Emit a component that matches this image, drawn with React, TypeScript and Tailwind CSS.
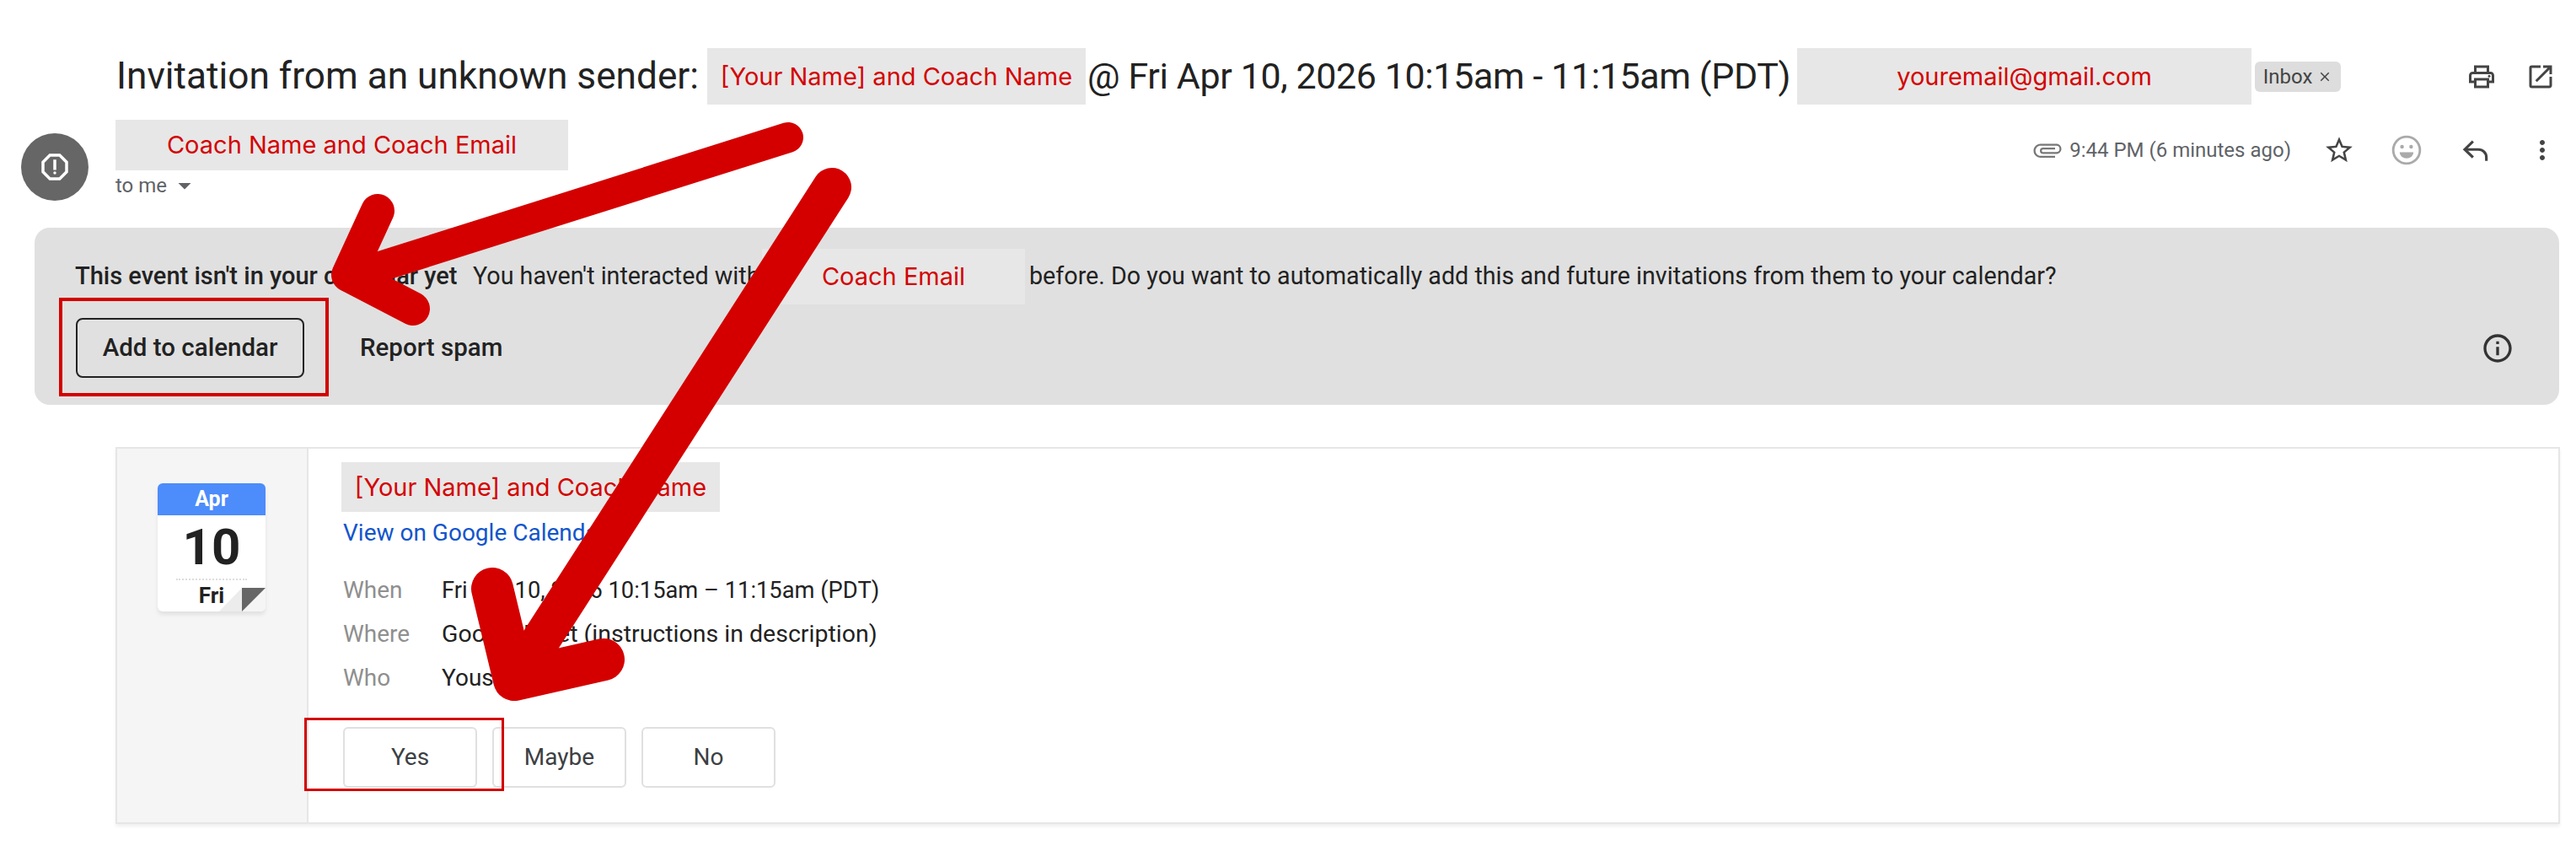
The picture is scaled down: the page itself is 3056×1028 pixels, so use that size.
import { MdOutlinePrint, MdOpenInNew, MdStarBorder, MdMoreVert, MdAttachFile, MdInfoOutline, MdOutlineReport, MdArrowDropDown, MdClose } from 'react-icons/md';

const sans = 'font-["Roboto",sans-serif]';
const redact = 'bg-[#e7e7e7] text-[#d40000] font-["Inter",sans-serif] flex items-center justify-center';

function DetailRow({ label, value, size }: { label: string; value: string; size: string }) {
  return (
    <div className="flex h-[52px] items-center text-[28px]">
      <div className="w-[117px] text-[#8f8f8f]">{label}</div>
      <div className={`text-[#222] ${size}`}>{value}</div>
    </div>
  );
}

function RsvpButton({ label }: { label: string }) {
  return (
    <div className="w-[159px] h-[72px] rounded-[6px] border-2 border-[#e0e0e0] bg-white flex items-center justify-center text-[28px] text-[#3c4043]">
      {label}
    </div>
  );
}

function CalendarBadge() {
  return (
    <div className="relative w-[128px] h-[152px] rounded-[6px] bg-white shadow-[0_4px_4px_#e2e2e2] overflow-hidden">
      <div className="h-[38px] bg-[#4d8cfb] text-white font-bold text-[25px] flex items-center justify-center">Apr</div>
      <div className="h-[75px] flex items-center justify-center text-[60px] font-bold text-[#222]">10</div>
      <div className="mx-[22px] border-t-2 border-dotted border-[#ddd]" />
      <div className="flex justify-center text-[26px] font-bold text-[#222] leading-[36px]">Fri</div>
      {/* page curl */}
      <div className="absolute right-0 bottom-0 w-[28px] h-[28px] bg-[#f5f5f5]" />
      <div className="absolute right-[28px] bottom-0 w-[27px] h-[28px] bg-[#ececec] [clip-path:polygon(100%_0,100%_100%,0_100%)]" />
      <div className="absolute right-0 bottom-0 w-[28px] h-[28px] bg-[#666] [clip-path:polygon(0_0,100%_0,0_100%)]" />
    </div>
  );
}

function SmileIcon() {
  return (
    <svg width="38" height="38" viewBox="0 0 24 24" className="ml-[42px]">
      <circle cx="12" cy="12" r="10" fill="none" stroke="#aaa" strokeWidth="1.8" />
      <circle cx="8.6" cy="9.5" r="1.4" fill="#aaa" />
      <circle cx="15.4" cy="9.5" r="1.4" fill="#aaa" />
      <path d="M6.8 13.6h10.4a5.2 4.6 0 0 1-10.4 0z" fill="#aaa" />
    </svg>
  );
}

function ReplyIcon() {
  return (
    <svg width="38" height="38" viewBox="0 0 24 24" fill="none" stroke="#444" strokeWidth="2" className="ml-[44px]">
      <path d="M10 5.5 3.8 11.5 10 17.5" />
      <path d="M3.8 11.5H14a6 6 0 0 1 6 6V20" />
    </svg>
  );
}

export default function App() {
  return (
    <div className={`relative w-[3056px] h-[1028px] bg-white overflow-hidden ${sans}`}>
      <div className="pt-[57px]">
        {/* subject line */}
        <div className="flex items-center pl-[138px] pr-[24px] h-[67px] text-[#222] whitespace-nowrap">
          <span className="w-[701px] text-[44.2px]">Invitation from an unknown sender:</span>
          <div className={`${redact} w-[449px] h-[67px] text-[29px]`}>[Your Name] and Coach Name</div>
          <span className="w-[844px] pl-[2px] text-[43px] tracking-[-0.4px]">@ Fri Apr 10, 2026 10:15am - 11:15am (PDT)</span>
          <div className={`${redact} w-[539px] h-[67px] text-[29px]`}>youremail@gmail.com</div>
          <div className="ml-[4px] w-[102px] h-[36px] rounded-[6px] bg-[#dddddd] text-[#444] text-[24px] flex items-center justify-center gap-[6px]">
            Inbox <MdClose size={18} />
          </div>
          <div className="ml-auto flex items-center gap-[34px] text-[#444]">
            <MdOutlinePrint size={36} />
            <MdOpenInNew size={36} />
          </div>
        </div>

        {/* sender row */}
        <div className="flex pl-[25px] pr-[22px] mt-[18px]">
          <div className="mt-[16px] w-[80px] h-[80px] rounded-full bg-[#666] flex items-center justify-center text-white">
            <MdOutlineReport size={42} />
          </div>
          <div className="ml-[32px]">
            <div className={`${redact} w-[537px] h-[60px] text-[29px]`}>Coach Name and Coach Email</div>
            <div className="flex items-center h-[36px] text-[24px] text-[#5f6368]">
              to me
              <MdArrowDropDown size={36} className="ml-[3px]" />
            </div>
          </div>
          <div className="ml-auto flex items-center h-[72px] text-[#444]">
            <MdAttachFile size={36} className="rotate-90 text-[#777]" />
            <span className="ml-[8px] text-[24px] text-[#5f6368]">9:44 PM (6 minutes ago)</span>
            <MdStarBorder size={38} className="ml-[38px]" />
            <SmileIcon />
            <ReplyIcon />
            <MdMoreVert size={36} className="ml-[42px]" />
          </div>
        </div>

        {/* banner */}
        <div className="ml-[41px] mt-[32px] w-[2995px] h-[210px] rounded-[18px] bg-[#e0e0e0] relative text-[#222]">
          <div className="flex items-center h-[107px] pt-[9px] pl-[48px] text-[28.7px] whitespace-nowrap">
            <span className="w-[472px] font-medium text-[29px]">This event isn't in your calendar yet</span>
            <span className="w-[343px]">You haven't interacted with</span>
            <div className={`${redact} w-[312px] h-[66px] text-[29px]`}>Coach Email</div>
            <span className="ml-[5px]">before. Do you want to automatically add this and future invitations from them to your calendar?</span>
          </div>
          <div className="flex items-center pl-[49px]">
            <div className="relative w-[271px] h-[71px] rounded-[8px] border-2 border-[#222] flex items-center justify-center text-[29.5px] font-medium">
              Add to calendar
              <div className="absolute left-[-22px] top-[-26px] w-[320px] h-[117px] border-[4px] border-[#d40000]" />
            </div>
            <div className="ml-[66px] text-[29.5px] font-medium">Report spam</div>
            <MdInfoOutline size={40} className="ml-auto mr-[53px] text-[#333]" />
          </div>
        </div>

        {/* invite card */}
        <div className="ml-[137px] mr-[19px] mt-[50px] h-[447px] border-2 border-[#e6e6e6] shadow-[0_3px_4px_#f0f0f0] flex">
          <div className="w-[227px] bg-[#f5f5f5] border-r-2 border-[#e6e6e6] pl-[48px] pt-[41px]">
            <CalendarBadge />
          </div>
          <div className="pl-[39px] pt-[16px]">
            <div className={`${redact} w-[449px] h-[59px] text-[29px]`}>[Your Name] and Coach Name</div>
            <div className="mt-[3px] h-[44px] flex items-center pl-[2px] text-[28px] text-[#1155cc]">View on Google Calendar</div>
            <div className="mt-[20px] pl-[2px]">
              <DetailRow label="When" value="Fri Apr 10, 2026 10:15am – 11:15am (PDT)" size="text-[27.3px]" />
              <DetailRow label="Where" value="Google Meet (instructions in description)" size="text-[28.5px]" />
              <DetailRow label="Who" value="Yous" size="text-[28px]" />
            </div>
            <div className="relative mt-[32px] flex gap-[18px] pl-[2px]">
              <RsvpButton label="Yes" />
              <RsvpButton label="Maybe" />
              <RsvpButton label="No" />
              <div className="absolute left-[-44px] top-[-11px] w-[237px] h-[87px] border-[3px] border-[#d40000]" />
            </div>
          </div>
        </div>
      </div>

      {/* annotation arrows */}
      <svg className="absolute left-0 top-0 pointer-events-none" width="3056" height="1028" fill="none" stroke="#d40000" strokeLinecap="round" strokeLinejoin="round">
        <path d="M935 163 L413 328" strokeWidth="36" />
        <path d="M448 250 L413 326 L490 366" strokeWidth="40" />
        <path d="M987 222 L612 805" strokeWidth="46" />
        <path d="M584 698 L610 806 L716 782" strokeWidth="50" />
      </svg>
    </div>
  );
}
